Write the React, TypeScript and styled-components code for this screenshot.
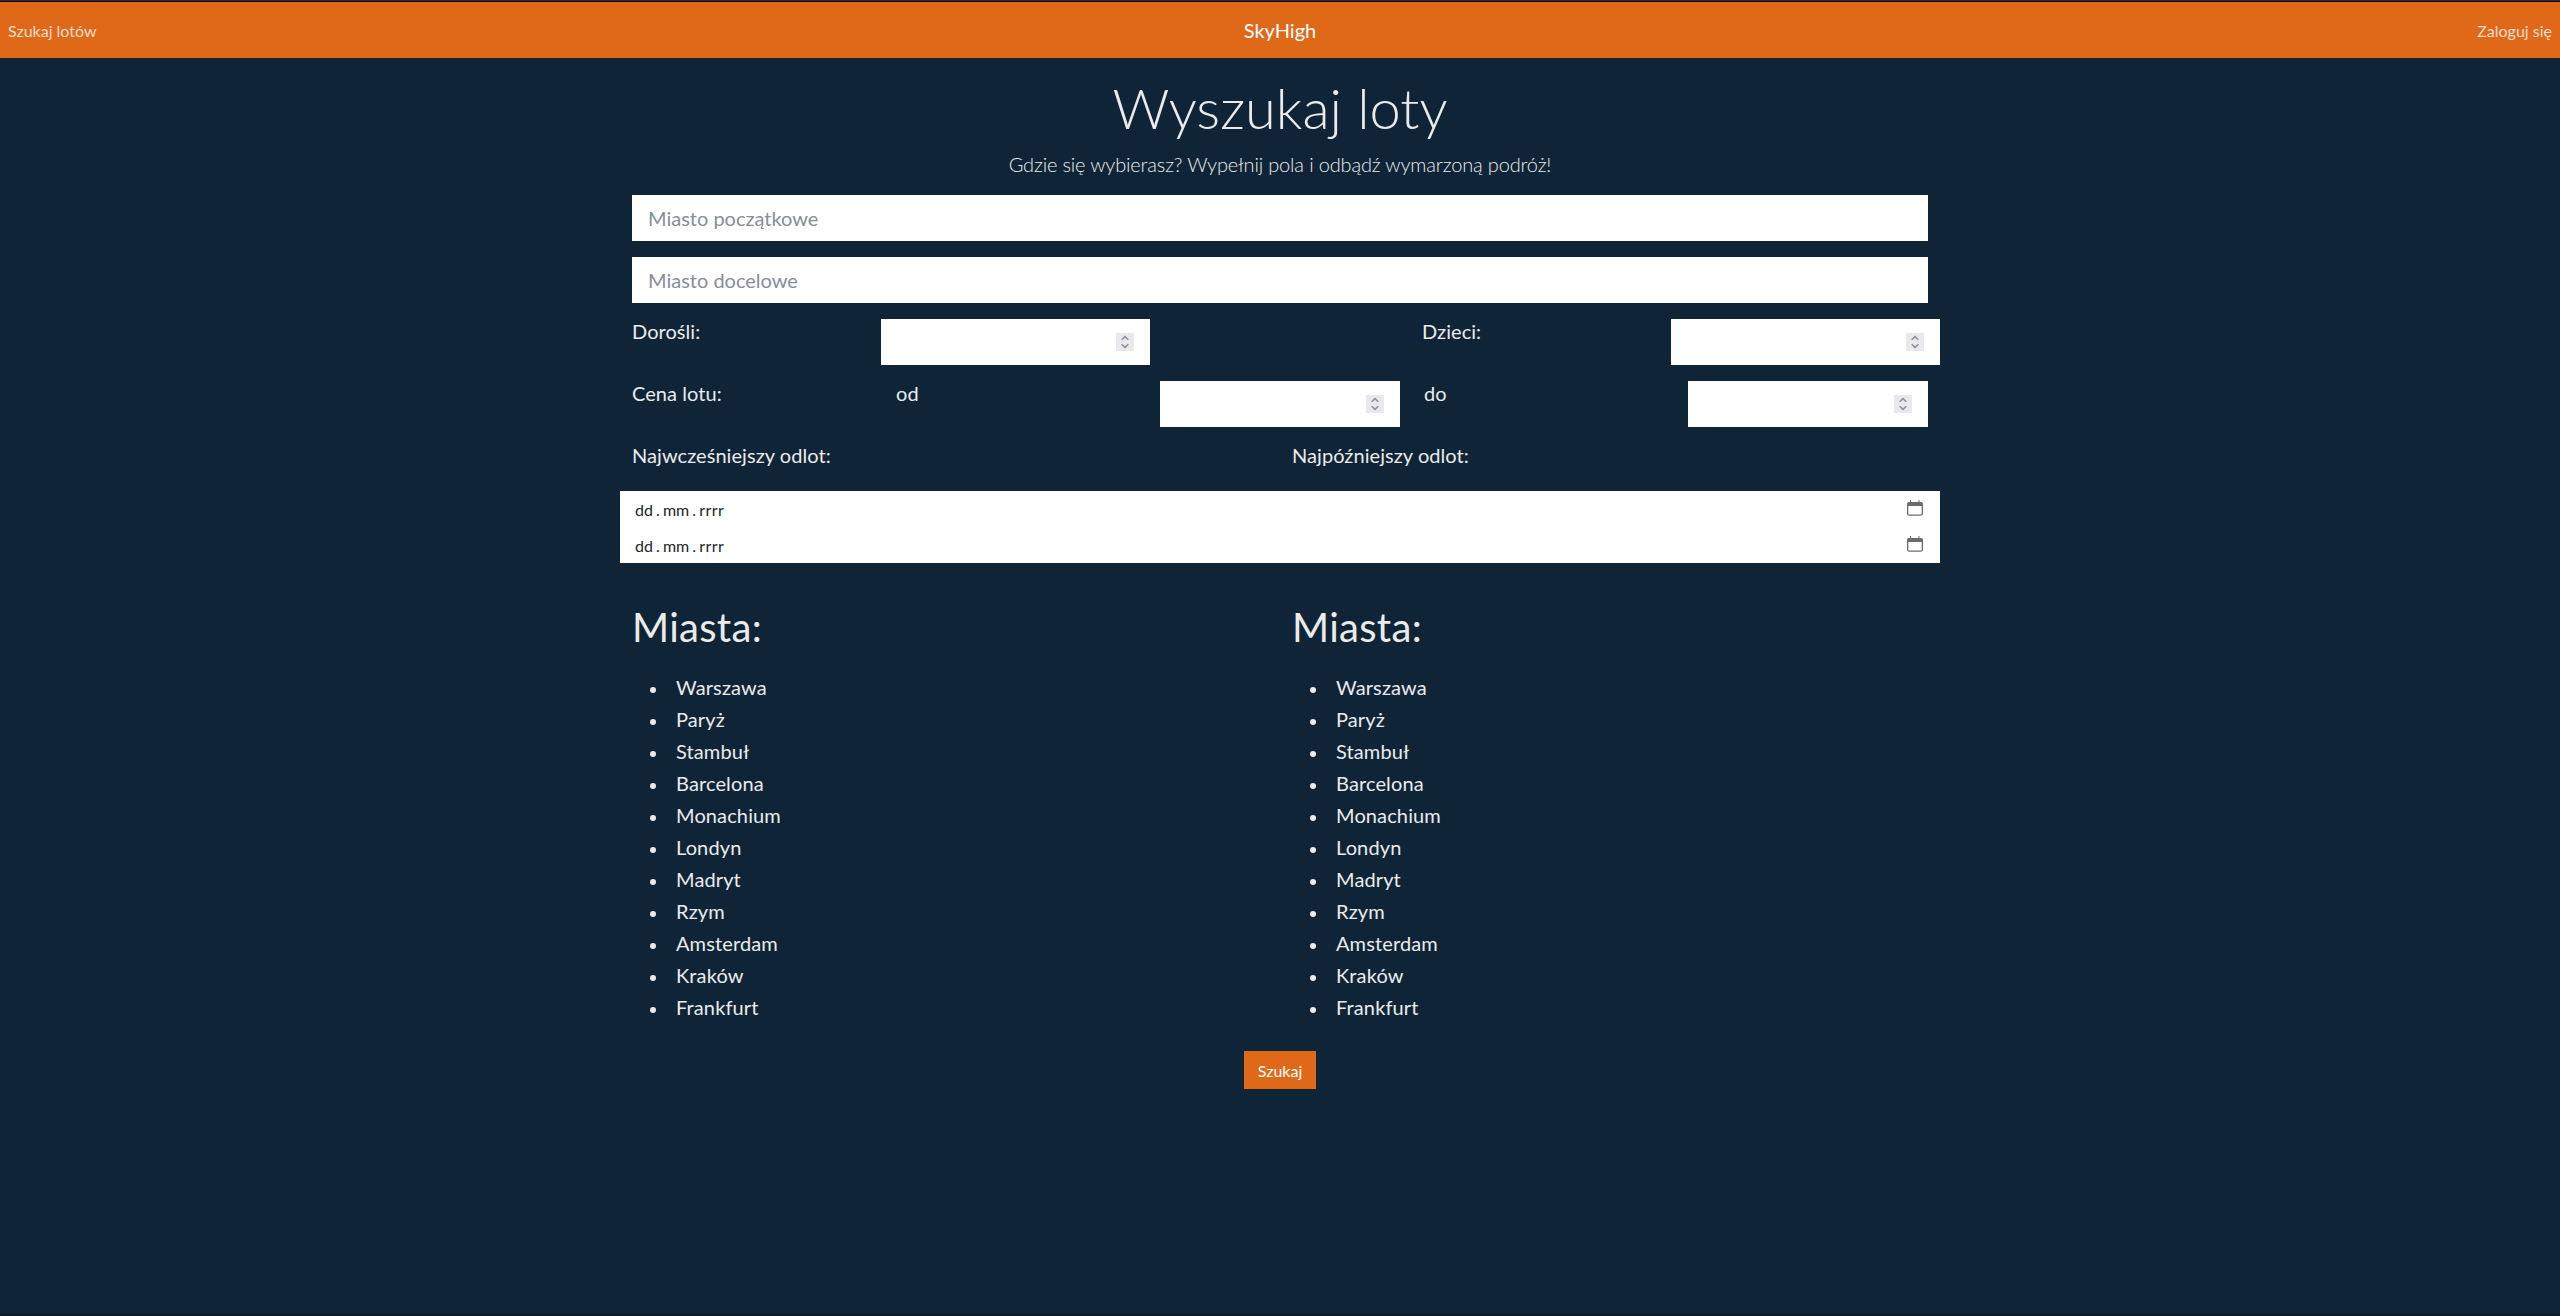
import React from "react";
import styled, { createGlobalStyle } from "styled-components";

const GlobalStyle = createGlobalStyle`
  *, *::before, *::after { box-sizing: border-box; }
  html { background: #0f2537; }
  body {
    margin: 0;
    background: #0f2537;
    color: #ebebeb;
    font-family: Lato, "Noto Sans", sans-serif;
    font-size: 16px;
    line-height: 1.5;
  }
`;

const Page = styled.div`
  height: 1316px;
  display: flex;
  flex-direction: column;
  border-bottom: 2px solid #0b1b29;
`;

const TopEdge = styled.div`
  height: 2px;
  flex: none;
  background: #2b2a33;
  border-bottom: 1px solid #0c0c0d;
`;

const Navbar = styled.nav`
  height: 56px;
  flex: none;
  display: grid;
  grid-template-columns: 1fr auto 1fr;
  align-items: center;
  padding: 0 8px;
  background: #df6919;
`;

const NavLink = styled.a<{ $end?: boolean }>`
  justify-self: ${(p) => (p.$end ? "end" : "start")};
  padding-top: 2px;
  color: rgba(255, 255, 255, 0.78);
  text-decoration: none;
`;

const Brand = styled.a`
  color: #fff;
  font-size: 20px;
  line-height: 30px;
  text-decoration: none;
`;

const Container = styled.main`
  width: 1320px;
  margin: 0 auto;
  padding: 0 12px;
`;

const Title = styled.h1`
  margin: 16px 0 8px;
  font-size: 56px;
  font-weight: 300;
  line-height: 67px;
  text-align: center;
`;

const Lead = styled.p`
  margin: 0 0 16px;
  font-size: 20px;
  font-weight: 300;
  line-height: 30px;
  letter-spacing: -0.165px;
  text-align: center;
`;

const TextField = styled.input`
  display: block;
  width: 100%;
  height: 46px;
  margin: 0 0 16px;
  padding: 8px 16px;
  border: 0;
  border-radius: 0;
  background: #fff;
  color: #212529;
  font-family: inherit;
  font-size: 20px;
  line-height: 30px;
  &::placeholder { color: #868e96; opacity: 1; }
`;

const FieldRow = styled.div<{ $cols: string }>`
  display: grid;
  grid-template-columns: ${(p) => p.$cols};
  height: 46px;
  margin: 0 -12px 16px 0;
`;

const Label = styled.label`
  font-size: 20px;
  line-height: 24px;
  letter-spacing: 0.06px;
`;

const NumberBox = styled.div`
  display: flex;
  align-items: center;
  justify-content: flex-end;
  height: 46px;
  padding: 0 16px;
  background: #fff;
`;

const Spinner = styled.span`
  display: flex;
  width: 18px;
  height: 18px;
  background: #e9e9ed;
`;

const DateHeads = styled.div`
  display: grid;
  grid-template-columns: 660px 1fr;
  height: 48px;
`;

const DateGroup = styled.div`
  margin: 0 -12px;
  background: #fff;
`;

const DateField = styled.div`
  display: flex;
  align-items: center;
  justify-content: space-between;
  height: 36px;
  padding: 0 17px 0 15px;
  color: #212529;
`;

const DateText = styled.span`
  display: flex;
  padding-top: 1px;
  line-height: 24px;
`;

const Dot = styled.span`
  width: 10px;
  text-align: center;
`;

const Year = styled.span`
  letter-spacing: 0.4px;
`;

const CalendarIcon = styled.svg`
  margin-bottom: 2px;
`;

const Lists = styled.div`
  display: grid;
  grid-template-columns: 660px 1fr;
  margin-top: 40px;
`;

const ListTitle = styled.h2`
  margin: 0 0 20px;
  font-size: 40px;
  font-weight: 400;
  line-height: 48px;
  letter-spacing: 0.3px;
`;

const Cities = styled.ul`
  margin: 0;
  padding: 0;
  list-style: none;
`;

const City = styled.li`
  display: flex;
  align-items: center;
  height: 32px;
  padding-left: 18px;
  font-size: 20px;
  line-height: 30px;
  letter-spacing: 0.12px;
  &::before {
    content: "";
    width: 6px;
    height: 6px;
    margin: 6px 20px 0 0;
    border-radius: 50%;
    background: #ebebeb;
  }
`;

const Submit = styled.button`
  display: block;
  width: 72px;
  height: 38px;
  margin: 28px auto 0;
  padding: 2px 0 0;
  border: 0;
  background: #df6919;
  color: #fff;
  font-family: inherit;
  font-size: 16px;
  line-height: 24px;
`;

const cities = [
  "Warszawa", "Paryż", "Stambuł", "Barcelona", "Monachium", "Londyn",
  "Madryt", "Rzym", "Amsterdam", "Kraków", "Frankfurt",
];

const NumberInput = () => (
  <NumberBox>
    <Spinner>
      <svg width="18" height="18" viewBox="0 0 18 18" fill="none" stroke="#8f8f9d" strokeWidth="1.5">
        <path d="M5.7 6.8 9 3.6l3.3 3.2M5.7 11.2 9 14.4l3.3-3.2" />
      </svg>
    </Spinner>
  </NumberBox>
);

const DateInput = () => (
  <DateField>
    <DateText>dd<Dot>.</Dot>mm<Dot>.</Dot><Year>rrrr</Year></DateText>
    <CalendarIcon width="16" height="16" viewBox="0 0 16 16" fill="none">
      <path d="M0 4a2 2 0 0 1 2-2h1V0h1v2h7.500V0h1v2H14a2 2 0 0 1 2 2v2H0z" fill="#6a6c6f" />
      <path d="M.65 5v8.700a1.500 1.500 0 0 0 1.500 1.500h11.700a1.500 1.500 0 0 0 1.500-1.500V5" stroke="#6a6c6f" strokeWidth="1.300" />
    </CalendarIcon>
  </DateField>
);

const CityList = () => (
  <section>
    <ListTitle>Miasta:</ListTitle>
    <Cities>{cities.map((c) => <City key={c}>{c}</City>)}</Cities>
  </section>
);

export default function App() {
  return (
    <Page>
      <GlobalStyle />
      <TopEdge />
      <Navbar>
        <NavLink>Szukaj lotów</NavLink>
        <Brand>SkyHigh</Brand>
        <NavLink $end>Zaloguj się</NavLink>
      </Navbar>
      <Container>
        <Title>Wyszukaj loty</Title>
        <Lead>Gdzie się wybierasz? Wypełnij pola i odbądź wymarzoną podróż!</Lead>
        <TextField placeholder="Miasto początkowe" />
        <TextField placeholder="Miasto docelowe" />
        <FieldRow $cols="249px 269px 272px 249px 269px">
          <Label>Dorośli:</Label>
          <NumberInput />
          <span />
          <Label>Dzieci:</Label>
          <NumberInput />
        </FieldRow>
        <FieldRow $cols="264px 264px 240px 24px 264px 240px">
          <Label>Cena lotu:</Label>
          <Label>od</Label>
          <NumberInput />
          <span />
          <Label>do</Label>
          <NumberInput />
        </FieldRow>
        <DateHeads>
          <Label>Najwcześniejszy odlot:</Label>
          <Label>Najpóźniejszy odlot:</Label>
        </DateHeads>
        <DateGroup>
          <DateInput />
          <DateInput />
        </DateGroup>
        <Lists>
          <CityList />
          <CityList />
        </Lists>
        <Submit>Szukaj</Submit>
      </Container>
    </Page>
  );
}
